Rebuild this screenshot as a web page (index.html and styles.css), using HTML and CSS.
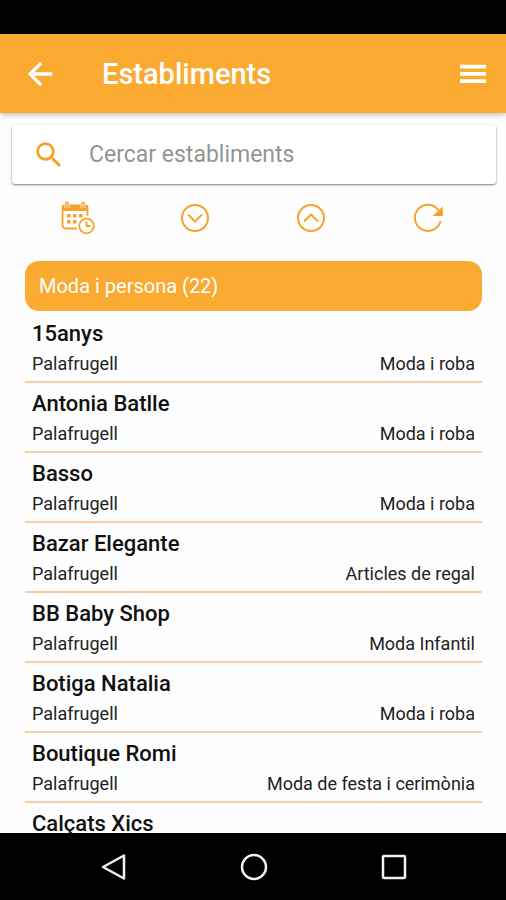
FILE: index.html
```html
<!DOCTYPE html>
<html lang="ca">
<head>
<meta charset="utf-8">
<meta name="viewport" content="width=device-width, initial-scale=1">
<title>Establiments</title>
<link rel="stylesheet" href="styles.css">
</head>
<body>
<div class="statusbar"></div>
<header class="appbar">
  <button class="icon-btn" type="button" aria-label="Enrere">
    <svg width="36" height="36" viewBox="0 0 24 24" fill="currentColor" stroke="currentColor" stroke-width="0.3"><path d="M20 11H7.83l5.59-5.59L12 4l-8 8 8 8 1.41-1.41L7.83 13H20v-2z"/></svg>
  </button>
  <h1 class="title">Establiments</h1>
  <button class="icon-btn" type="button" aria-label="Menú">
    <svg width="36" height="36" viewBox="0 0 24 24" fill="currentColor"><path d="M3.300 18h17.400v-2.500H3.300V18zm0-4.800h17.400v-2.500H3.300v2.500zM3.300 5.900v2.500h17.400V5.900H3.300z"/></svg>
  </button>
</header>
<main class="content">
  <label class="search">
    <svg width="34" height="34" viewBox="0 0 24 24" fill="currentColor" aria-hidden="true"><path d="M15.5 14h-.79l-.28-.27A6.471 6.471 0 0 0 16 9.500 6.500 6.500 0 1 0 9.500 16c1.610 0 3.090-.590 4.230-1.570l.270.280v.790l5 4.990L20.490 19l-4.990-5zm-6 0C7.010 14 5 11.990 5 9.500S7.010 5 9.500 5 14 7.010 14 9.500 11.990 14 9.500 14z"/></svg>
    <input class="search-input" type="text" placeholder="Cercar establiments" aria-label="Cercar establiments">
  </label>
  <div class="tools">
    <button class="tool" type="button" aria-label="Horari">
      <svg width="34" height="34" viewBox="0 0 34 34" fill="none" stroke="currentColor" stroke-width="1.800">
        <path d="M16 27.500H4.500a3 3 0 0 1-3-3V6a1.500 1.500 0 0 1 1.500-1.500h22a1.500 1.500 0 0 1 1.500 1.500v9"/>
        <path d="M1.500 4.500h25V10h-25z" fill="currentColor" stroke="none"/>
        <path d="M6 1v6M22 1v6" stroke="#fff" stroke-width="5"/>
        <rect x="4.800" y="1.500" width="2.400" height="5.500" rx="1.200" stroke-width="1.400"/>
        <rect x="20.800" y="1.500" width="2.400" height="5.500" rx="1.200" stroke-width="1.400"/>
        <path d="M6 13h3.500v3.500H6zM12 13h3.500v3.500H12zM18 13h3.500v3.500H18zM6 19h3.500v3.500H6zM12 19h3.500v3.500H12z" fill="currentColor" stroke="none"/>
        <circle cx="25.500" cy="25" r="9" fill="#fff" stroke="none"/>
        <circle cx="25.500" cy="25" r="7.300"/>
        <path d="M25.500 20.500V25h4"/>
      </svg>
    </button>
    <button class="tool" type="button" aria-label="Desplegar">
      <svg width="34" height="34" viewBox="0 0 34 34" fill="none" stroke="currentColor" stroke-width="2"><circle cx="17" cy="17" r="13"/><path d="M10.500 14l6.500 6.500 6.500-6.500" stroke-linecap="round"/></svg>
    </button>
    <button class="tool" type="button" aria-label="Plegar">
      <svg width="34" height="34" viewBox="0 0 34 34" fill="none" stroke="currentColor" stroke-width="2"><circle cx="17" cy="17" r="13"/><path d="M10.500 20l6.500-6.500 6.500 6.500" stroke-linecap="round"/></svg>
    </button>
    <button class="tool" type="button" aria-label="Actualitzar">
      <svg width="34" height="34" viewBox="0 0 34 34" fill="none" stroke="currentColor" stroke-width="2"><path d="M29.200 21a13 13 0 1 1-2.200-12.300" stroke-linecap="round"/><path d="M31.800 5.500v9.500H21.500z" fill="currentColor" stroke="none"/></svg>
    </button>
  </div>
  <section class="group">
    <h2 class="group-title">Moda i persona (22)</h2>
    <ul class="list">
      <li class="row"><h3 class="name">15anys</h3><div class="meta"><span>Palafrugell</span><span>Moda i roba</span></div></li>
      <li class="row"><h3 class="name">Antonia Batlle</h3><div class="meta"><span>Palafrugell</span><span>Moda i roba</span></div></li>
      <li class="row"><h3 class="name">Basso</h3><div class="meta"><span>Palafrugell</span><span>Moda i roba</span></div></li>
      <li class="row"><h3 class="name">Bazar Elegante</h3><div class="meta"><span>Palafrugell</span><span>Articles de regal</span></div></li>
      <li class="row"><h3 class="name">BB Baby Shop</h3><div class="meta"><span>Palafrugell</span><span>Moda Infantil</span></div></li>
      <li class="row"><h3 class="name">Botiga Natalia</h3><div class="meta"><span>Palafrugell</span><span>Moda i roba</span></div></li>
      <li class="row"><h3 class="name">Boutique Romi</h3><div class="meta"><span>Palafrugell</span><span>Moda de festa i cerimònia</span></div></li>
      <li class="row"><h3 class="name">Calçats Xics</h3></li>
    </ul>
  </section>
</main>
<nav class="navbar">
  <button class="nav-btn" type="button" aria-label="Enrere">
    <svg width="32" height="32" viewBox="0 0 32 32" fill="none" stroke="currentColor" stroke-width="2.500" stroke-linejoin="round"><path d="M26 4.500v23L5 16z"/></svg>
  </button>
  <button class="nav-btn" type="button" aria-label="Inici">
    <svg width="32" height="32" viewBox="0 0 32 32" fill="none" stroke="currentColor" stroke-width="2.500"><circle cx="16" cy="16" r="12"/></svg>
  </button>
  <button class="nav-btn" type="button" aria-label="Recents">
    <svg width="32" height="32" viewBox="0 0 32 32" fill="none" stroke="currentColor" stroke-width="2.500"><rect x="5" y="5" width="22" height="22" rx="1"/></svg>
  </button>
</nav>
</body>
</html>
```
FILE: styles.css
```css
* {
  box-sizing: border-box;
}

body {
  margin: 0;
  height: 100vh;
  display: flex;
  flex-direction: column;
  overflow: hidden;
  background: #fefefe;
  color: #111;
  font-family: Roboto, "Liberation Sans", sans-serif;
}

h1, h2, h3, ul {
  margin: 0;
  padding: 0;
}

button {
  border: 0;
  padding: 0;
  background: none;
  color: inherit;
}

svg {
  display: block;
}

.statusbar {
  flex: none;
  height: 34px;
  background: #000;
}

.appbar {
  position: relative;
  flex: none;
  display: flex;
  align-items: center;
  gap: 44px;
  height: 79px;
  padding: 0 15px 0 22px;
  background: #faaa30;
  color: #fff;
  box-shadow: 0 2px 6px rgba(0, 0, 0, 0.25);
}

.title {
  flex: 1;
  font-size: 29px;
  line-height: 32px;
  font-weight: 500;
}

.content {
  flex: 1;
  min-height: 0;
  overflow: hidden;
  padding-top: 12px;
}

.search {
  display: flex;
  align-items: center;
  gap: 23px;
  height: 59px;
  margin: 0 10px 0 12px;
  padding: 0 20px;
  border-radius: 3px;
  background: #fff;
  color: #f5a21f;
  box-shadow: 0 1px 2px rgba(0, 0, 0, 0.4), 0 1px 3px rgba(0, 0, 0, 0.15);
}

.search-input {
  flex: 1;
  min-width: 0;
  border: 0;
  padding: 0;
  outline: 0;
  background: none;
  font-family: inherit;
  font-size: 23px;
  line-height: 28px;
  color: #333;
}

.search-input::placeholder {
  color: #949494;
}

.tools {
  display: grid;
  grid-template-columns: repeat(4, 1fr);
  margin: 17px 20px 26px;
  color: #f5a32a;
}

.tool,
.nav-btn {
  display: grid;
  place-items: center;
}

.group {
  margin: 0 24px 0 25px;
}

.group-title {
  height: 50px;
  padding: 0 14px;
  border-radius: 14px;
  background: #faaa30;
  color: #fff;
  font-size: 20px;
  line-height: 50px;
  font-weight: 400;
}

.list {
  padding-top: 2px;
  list-style: none;
}

.row {
  height: 70px;
  padding: 7px 7px 0;
  border-bottom: 2px solid #f9cda5;
}

.name {
  font-size: 22px;
  line-height: 28px;
  font-weight: 500;
}

.meta {
  display: flex;
  justify-content: space-between;
  padding-top: 4px;
  font-size: 18px;
  line-height: 24px;
  color: #222;
}

.navbar {
  flex: none;
  display: grid;
  grid-template-columns: repeat(3, 1fr);
  height: 67px;
  padding: 0 42px 0 44px;
  background: #000;
  color: #f2f2f2;
}
```
